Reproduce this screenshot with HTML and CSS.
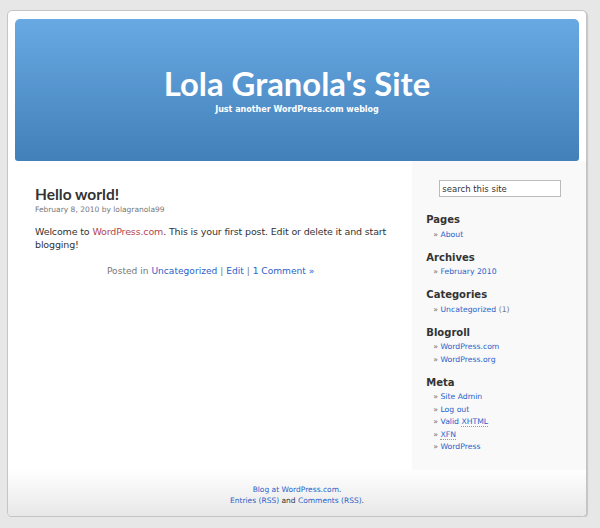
FILE: index.html
```html
<!DOCTYPE html>
<html lang="en">
<head>
    <meta charset="UTF-8">
    <title>Lola Granola's Site</title>
    <link rel="stylesheet" href="styles.css">
</head>
<body class="body">

<div class="page">

    <div class="header">
        <h1 class="titulo">Lola Granola's Site</h1>
        <div class="descricao">Just another WordPress.com weblog</div>
    </div>

    <div class="conteudo">

        <div class="principal">
            <h2 class="post-titulo">Hello world!</h2>
            <div class="data">February 8, 2010 by lolagranola99</div>
            <p class="texto">Welcome to <a class="vermelho" href="#">WordPress.com</a>. This is your first post. Edit or delete it and start blogging!</p>
            <p class="meta">Posted in <a href="#">Uncategorized</a> | <a href="#">Edit</a> | <a href="#">1 Comment &raquo;</a></p>
        </div>

        <div class="sidebar">
            <form class="busca">
                <input class="campo" type="text" value="search this site">
            </form>

            <h3 class="titulo-bloco">Pages</h3>
            <ul class="lista">
                <li>&raquo; <a href="#">About</a></li>
            </ul>

            <h3 class="titulo-bloco">Archives</h3>
            <ul class="lista">
                <li>&raquo; <a href="#">February 2010</a></li>
            </ul>

            <h3 class="titulo-bloco">Categories</h3>
            <ul class="lista">
                <li>&raquo; <a href="#">Uncategorized</a> (1)</li>
            </ul>

            <h3 class="titulo-bloco">Blogroll</h3>
            <ul class="lista">
                <li>&raquo; <a href="#">WordPress.com</a></li>
                <li>&raquo; <a href="#">WordPress.org</a></li>
            </ul>

            <h3 class="titulo-bloco">Meta</h3>
            <ul class="lista">
                <li>&raquo; <a href="#">Site Admin</a></li>
                <li>&raquo; <a href="#">Log out</a></li>
                <li>&raquo; <a href="#">Valid <abbr title="eXtensible HyperText Markup Language">XHTML</abbr></a></li>
                <li>&raquo; <a href="#"><abbr title="XHTML Friends Network">XFN</abbr></a></li>
                <li>&raquo; <a href="#">WordPress</a></li>
            </ul>
        </div>

    </div>

    <div class="rodape">
        <a href="#">Blog at WordPress.com</a>.<br>
        <a href="#">Entries (RSS)</a> and <a href="#">Comments (RSS)</a>.
    </div>

</div>

</body>
</html>
```

FILE: styles.css
```css
.body{
    margin: 0;
    padding: 10px 0 0 7px;
    background-color: #e7e7e7;
    font-family: "DejaVu Sans", Verdana, sans-serif;
    color: #333;
}
a{
    color: #2a62c9;
    text-decoration: none;
}
.page{
    width: 578px;
    background-color: #fff;
    border: 1px solid #c4c4c4;
    border-radius: 5px;
    box-shadow: 1px 1px 1px rgba(0, 0, 0, 0.15);
    overflow: hidden;
}
.header{
    margin: 8px 7px 0 7px;
    height: 142px;
    border-radius: 5px 5px 3px 3px;
    background: linear-gradient(#69a9e3, #4180b9);
    text-align: center;
    color: #fff;
    display: flex;
    flex-direction: column;
    justify-content: center;
}
.titulo{
    margin: 0;
    font-family: Lato, "DejaVu Sans", sans-serif;
    font-size: 32.8px;
    line-height: 34px;
    font-weight: bold;
}
.descricao{
    font-size: 8px;
    font-weight: bold;
    margin-top: 4px;
}
.conteudo{
    display: flex;
}
.principal{
    width: 352px;
    padding: 24px 26px 0 27px;
}
.post-titulo{
    margin: 0;
    font-family: Lato, "DejaVu Sans", sans-serif;
    font-size: 15.5px;
    line-height: 19px;
    color: #333;
}
.data{
    font-size: 7.5px;
    color: #777;
    margin-top: 1px;
}
.texto{
    font-size: 9.5px;
    line-height: 13px;
    letter-spacing: -0.15px;
    margin: 11px 0 0 0;
}
.vermelho{
    color: #b5464d;
}
.meta{
    font-size: 9.1px;
    color: #777;
    text-align: center;
    margin: 15px 0 0 0;
}
.sidebar{
    width: 160px;
    padding: 19px 0 7px 14px;
    background-color: #f9f9f9;
    font-size: 7.7px;
    color: #777;
}
.busca{
    margin: 0 0 16px 13px;
}
.campo{
    width: 116px;
    height: 13px;
    padding: 1px 2px;
    border: 1px solid #bbb;
    font-family: "DejaVu Sans", Verdana, sans-serif;
    font-size: 8.5px;
    color: #333;
}
.titulo-bloco{
    margin: 0;
    font-size: 10px;
    line-height: 13px;
    color: #333;
}
.lista{
    list-style: none;
    margin: 2.5px 0 9.5px 7px;
    padding: 0;
}
.lista li{
    line-height: 12.5px;
}
abbr{
    text-decoration: none;
    border-bottom: 1px dotted #999;
}
.rodape{
    height: 46px;
    padding-top: 14px;
    box-sizing: border-box;
    background: linear-gradient(#fff, #e8e8e8);
    text-align: center;
    font-size: 7.5px;
    line-height: 11px;
    color: #333;
}
```
